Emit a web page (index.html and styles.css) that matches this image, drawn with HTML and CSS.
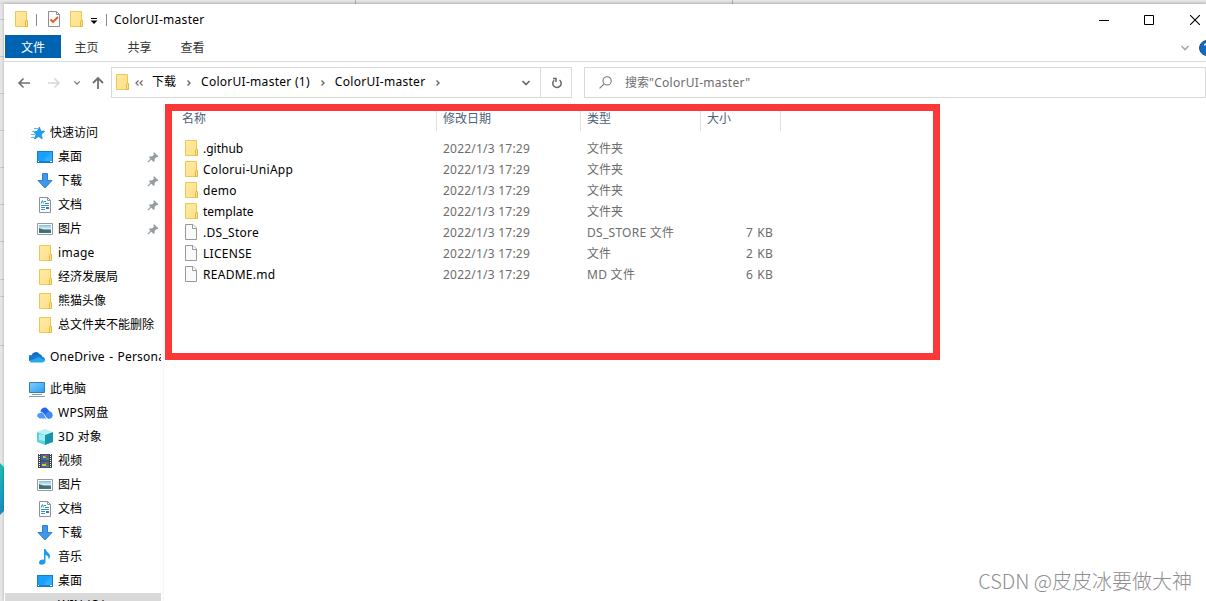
FILE: index.html
```
<!doctype html>
<html lang="zh-CN">
<head>
    <meta charset="UTF-8">
    <meta name="viewport" content="width=device-width, initial-scale=1.0">
    <title>ColorUI-master</title>
    <link rel="stylesheet" href="styles.css">
</head>
<body>
    <!-- shared icons -->
    <svg class="sprite">
        <defs>
            <linearGradient id="g-folder" x1="0" y1="0" x2="1" y2="1"><stop offset="0" stop-color="#ffe9a2"/><stop offset="1" stop-color="#ffe08a"/></linearGradient>
            <linearGradient id="g-sky" x1="0" y1="0" x2="0" y2="1"><stop offset="0" stop-color="#7db8ea"/><stop offset=".5" stop-color="#e8f4fb"/><stop offset=".6" stop-color="#4c7d76"/><stop offset="1" stop-color="#3d6f9c"/></linearGradient>
            <linearGradient id="g-screen" x1="0" y1="0" x2="1" y2="1"><stop offset="0" stop-color="#7fd0fb"/><stop offset="1" stop-color="#2a9df4"/></linearGradient>
            <linearGradient id="g-cloud" x1="0" y1="0" x2="0" y2="1"><stop offset="0" stop-color="#0f5fb8"/><stop offset="1" stop-color="#1f9cec"/></linearGradient>
        </defs>
        <symbol id="folder" viewBox="0 0 16 16">
            <path d="M2.500.5h11V15.500h-11z" fill="url(#g-folder)" stroke="#ecc850"/>
            <path d="M12.500 15.500v-5l.5-1h1.500v6z" fill="#ffe48f" stroke="#e3b93c"/>
        </symbol>
        <symbol id="file" viewBox="0 0 16 16">
            <path d="M2.500.5h7.500l3.500 3.500v11.500h-11z" fill="#fafafa" stroke="#999"/>
            <path d="M9.500.5v4h4" fill="#fff" stroke="#999"/>
        </symbol>
        <symbol id="doc" viewBox="0 0 16 16">
            <path d="M2.500.5h8l3 3v12h-11z" fill="#fff" stroke="#8d9296"/>
            <path d="M10.500.5v3h3" fill="none" stroke="#8d9296"/>
            <path d="M4 6.500l1.500-3 1 3M7 4.500h2M8 6.500h4M4 8.500h8M4 10.500h4M4 12.500h4" fill="none" stroke="#2b93d6"/>
            <path d="M9 10h3v2H9z" fill="#3978a8"/>
        </symbol>
        <symbol id="picture" viewBox="0 0 16 16">
            <path d="M.5 2.500h15v11H.5z" fill="#fff" stroke="#999"/>
            <path d="M2 4h12v8H2z" fill="url(#g-sky)"/>
            <path d="M2 7l5 2 7 1v1H2z" fill="#3f716b"/>
        </symbol>
        <symbol id="desktop" viewBox="0 0 16 16">
            <path d="M0 2h16v12H0z" fill="#0e80d5"/>
            <path d="M1 3h14v9H1z" fill="#18a0fb"/>
            <path d="M15 3v9H6z" fill="#35adfd"/>
            <path d="M1 12.500h1M13 12.500h2" stroke="#fff"/>
        </symbol>
        <symbol id="download" viewBox="0 0 16 16">
            <path d="M5.500.5h5v7h4.500L8 15 1 7.500h4.500z" fill="#3f97e8" stroke="#2f80cf"/>
        </symbol>
        <symbol id="star" viewBox="0 0 16 16">
            <path d="M10.500 2l1.200 4 4 .3-3.300 3 .8 4.700-3.500-2.500L5.500 14l1.500-4.500-2.500-3 3.800-.2z" fill="#1ba1f2" stroke="#1687cf" stroke-width=".7"/>
            <path d="M5 3.500h4M3 6.500h3M2 9.500h4M2 12.500h4" stroke="#5cbaf5"/>
        </symbol>
        <symbol id="onedrive" viewBox="0 0 16 16">
            <path d="M3 12a3 3 0 0 1-.5-5.500A4.500 4.500 0 0 1 10.500 5a4 4 0 0 1 3 3A2.500 2.500 0 0 1 13.500 13H3z" fill="url(#g-cloud)"/>
            <path d="M.5 12L9 8l6.500 3A2.500 2.500 0 0 1 13.500 13.500H3.500A3 3 0 0 1 .5 12z" fill="#28a8ea"/>
            <path d="M.5 12a3 3 0 0 1 2.500-5.500l6 1.700z" fill="#1479ce"/>
        </symbol>
        <symbol id="pc" viewBox="0 0 16 16">
            <path d="M.5 1.500h15v10H.5z" fill="url(#g-screen)" stroke="#3c7da8"/>
            <path d="M0 15.500h16M3 13.500h10" stroke="#8b9bab"/>
        </symbol>
        <symbol id="wps" viewBox="0 0 16 16">
            <path d="M3 13.500A3 3 0 0 1 1 8.500l4-1 5 6z" fill="#4b9bf9"/>
            <path d="M3.500 7A4 4 0 0 1 10.500 4l3 3.500A3.500 3.500 0 0 1 13 13.500h-2z" fill="#2268e4"/>
            <path d="M11 6.500a3.500 3.500 0 0 1 2 7h-2l-3-4z" fill="#3c8bf6"/>
            <path d="M3 7.300c2-.3 3 .5 4 2l2.500 4" fill="none" stroke="#fff" stroke-width=".8"/>
        </symbol>
        <symbol id="cube" viewBox="0 0 16 16">
            <path d="M0 3l8-3 8 3-8 3z" fill="#b5f1f5"/>
            <path d="M0 3l8 3v10l-8-3z" fill="#58d5df"/>
            <path d="M16 3L8 6v10l8-3z" fill="#1795ac"/>
            <path d="M2 5l6 1v6l-6-1z" fill="#a4ecf1"/>
        </symbol>
        <symbol id="video" viewBox="0 0 16 16">
            <path d="M1 1h14v14H1z" fill="#454545"/>
            <path d="M2.500 1v14M13.500 1v14" stroke="#fff" stroke-dasharray="1 1"/>
            <path d="M4 1.500h8v6H4zM4 8.500h8v6H4z" fill="#3567b2"/>
            <path d="M6 3h3v2H6zM5 11h4v2H5z" fill="#f0ba32"/>
            <path d="M9 5h3v2H9zM9 12h3v2H9z" fill="#3f9a4a"/>
            <path d="M8 2h2v2H8zM8 9h2v2H8z" fill="#d84d36"/>
        </symbol>
        <symbol id="music" viewBox="0 0 16 16">
            <path d="M7 0h1.500c.5 3 5 4 4.500 7.500-.2 1.500-1 2.500-1.500 3 .5-3-1-4-3-4.500v7c0 3-6.500 4-6.500.8C2 11 5.500 10 7 11z" fill="#1a9df0"/>
        </symbol>
        <symbol id="drive" viewBox="0 0 16 16">
            <path d="M0 7.500l4-.6v4H0zM5 6.700l5-.7v5H5z" fill="#10b4f0"/>
        </symbol>
        <symbol id="pin" viewBox="0 0 12 12">
            <path d="M7 1l4.500 4.500-1 .8-1-.3-2 2 .2 2-1 1L2 6.300l1-1 2 .2 2-2-.5-1.200z" fill="#939ca3"/>
            <path d="M4.300 7.700L1 11" stroke="#939ca3" stroke-width="1.200"/>
        </symbol>
        <symbol id="chevron-right" viewBox="0 0 8 8">
            <path d="M2.500 1.500L5 4 2.500 6.500" fill="none" stroke="#666" stroke-width="1.400"/>
        </symbol>
        <symbol id="chevron-down" viewBox="0 0 10 10">
            <path d="M1.500 3L5 6.500 8.500 3" fill="none" stroke="currentColor" stroke-width="1.600"/>
        </symbol>
    </svg>

    <!-- edge of the window behind -->
    <div class="behind">
        <span class="tab-edge first"></span>
        <span class="tab-edge second"></span>
        <span class="line l1"></span>
        <span class="line l2"></span>
        <span class="line l3"></span>
        <span class="line l4"></span>
        <span class="line l5"></span>
        <span class="line l6"></span>
        <span class="line l7"></span>
        <span class="line l8"></span>
        <span class="line l9"></span>
        <span class="line l10"></span>
        <span class="bubble"></span>
    </div>

    <div class="window">
        <div class="title-bar">
            <svg class="icon"><use href="#folder"/></svg>
            <span class="sep"></span>
            <svg class="icon check" viewBox="0 0 16 16">
                <path d="M2.500.5h8l3 3v12h-11z" fill="#fafafa" stroke="#8f8f8f"/>
                <path d="M10.500.5v3h3" fill="none" stroke="#8f8f8f"/>
                <path d="M4.500 8.500l2.500 2.500 5-5" fill="none" stroke="#e8562a" stroke-width="1.800"/>
            </svg>
            <svg class="icon new"><use href="#folder"/></svg>
            <svg class="customize" viewBox="0 0 8 8"><path d="M1 1.500h6" stroke="#000"/><path d="M.5 3.500h7L4 7z"/></svg>
            <span class="sep after"></span>
            <span class="title wide">ColorUI-master</span>
            <div class="controls">
                <svg viewBox="0 0 10 10"><path d="M0 5.500h10" stroke="#000"/></svg>
                <svg viewBox="0 0 10 10"><path d="M.5.5h9v9h-9z" fill="none" stroke="#000"/></svg>
                <svg viewBox="0 0 10 10"><path d="M0 0l10 10M10 0L0 10" stroke="#000" stroke-width="1.100"/></svg>
            </div>
        </div>

        <div class="ribbon">
            <a class="active">文件</a>
            <a>主页</a>
            <a>共享</a>
            <a>查看</a>
            <svg class="expand"><use href="#chevron-down"/></svg>
            <svg class="help" viewBox="0 0 7 16">
                <circle cx="8" cy="8" r="7.500" fill="#0b6bc7" stroke="#2c4f78"/>
                <path d="M5.500 5.500Q6 4 7 3.700" fill="none" stroke="#fff" stroke-width="1.400"/>
            </svg>
        </div>

        <div class="address-row">
            <div class="arrows">
                <svg class="back" viewBox="0 0 14 14"><path d="M13 7H2M6.500 2.500L2 7l4.500 4.500" fill="none" stroke="#707070" stroke-width="1.600"/></svg>
                <svg class="forward" viewBox="0 0 14 14"><path d="M1 7h11M7.500 2.500L12 7l-4.500 4.500" fill="none" stroke="#d8d8d8" stroke-width="1.600"/></svg>
                <svg class="recent"><use href="#chevron-down"/></svg>
                <svg class="up" viewBox="0 0 14 14"><path d="M7 13V2M2 7l5-5 5 5" fill="none" stroke="#707070" stroke-width="1.800"/></svg>
            </div>
            <div class="address">
                <svg class="icon"><use href="#folder"/></svg>
                <svg class="more" viewBox="0 0 10 8"><path d="M4.500 1.500L2 4l2.500 2.500M8.500 1.500L6 4l2.500 2.500" fill="none" stroke="#666" stroke-width="1.200"/></svg>
                <span class="crumb">下载</span>
                <svg class="arrow"><use href="#chevron-right"/></svg>
                <span class="crumb wide">ColorUI-master (1)</span>
                <svg class="arrow"><use href="#chevron-right"/></svg>
                <span class="crumb wide">ColorUI-master</span>
                <svg class="arrow"><use href="#chevron-right"/></svg>
                <svg class="drop"><use href="#chevron-down"/></svg>
                <span class="refresh">
                    <svg viewBox="0 0 12 12"><path d="M3.200 3.200A4.200 4.200 0 1 0 8.500 3M2 1.500h3V5" fill="none" stroke="#666" stroke-width="1.500"/></svg>
                </span>
            </div>
            <div class="search">
                <svg viewBox="0 0 12 12"><circle cx="7.500" cy="4.500" r="3.800" fill="none" stroke="#777"/><path d="M4.800 7.200L.5 11.500" stroke="#777"/></svg>
                <span>搜索<span class="wide">"ColorUI-master"</span></span>
            </div>
        </div>

        <div class="main">
            <div class="sidebar">
                <div class="item root"><svg class="icon"><use href="#star"/></svg><span>快速访问</span></div>
                <div class="item"><svg class="icon"><use href="#desktop"/></svg><span>桌面</span><svg class="pin"><use href="#pin"/></svg></div>
                <div class="item"><svg class="icon"><use href="#download"/></svg><span>下载</span><svg class="pin"><use href="#pin"/></svg></div>
                <div class="item"><svg class="icon"><use href="#doc"/></svg><span>文档</span><svg class="pin"><use href="#pin"/></svg></div>
                <div class="item"><svg class="icon"><use href="#picture"/></svg><span>图片</span><svg class="pin"><use href="#pin"/></svg></div>
                <div class="item"><svg class="icon"><use href="#folder"/></svg><span class="wide">image</span></div>
                <div class="item"><svg class="icon"><use href="#folder"/></svg><span>经济发展局</span></div>
                <div class="item"><svg class="icon"><use href="#folder"/></svg><span>熊猫头像</span></div>
                <div class="item"><svg class="icon"><use href="#folder"/></svg><span>总文件夹不能删除</span></div>
                <div class="item root spaced"><svg class="icon"><use href="#onedrive"/></svg><span class="onedrive">OneDrive - Personal</span></div>
                <div class="item root spaced"><svg class="icon"><use href="#pc"/></svg><span>此电脑</span></div>
                <div class="item"><svg class="icon"><use href="#wps"/></svg><span class="wide">WPS网盘</span></div>
                <div class="item"><svg class="icon"><use href="#cube"/></svg><span class="wide">3D 对象</span></div>
                <div class="item"><svg class="icon"><use href="#video"/></svg><span>视频</span></div>
                <div class="item"><svg class="icon"><use href="#picture"/></svg><span>图片</span></div>
                <div class="item"><svg class="icon"><use href="#doc"/></svg><span>文档</span></div>
                <div class="item"><svg class="icon"><use href="#download"/></svg><span>下载</span></div>
                <div class="item"><svg class="icon"><use href="#music"/></svg><span>音乐</span></div>
                <div class="item"><svg class="icon"><use href="#desktop"/></svg><span>桌面</span></div>
                <div class="item selected"><svg class="icon"><use href="#drive"/></svg><span class="wide">WIN (C:)</span></div>
            </div>

            <div class="files">
                <div class="row head">
                    <span>名称</span>
                    <span>修改日期</span>
                    <span>类型</span>
                    <span>大小</span>
                </div>
                <div class="row"><span class="name"><svg class="icon"><use href="#folder"/></svg>.github</span><span class="date">2022/1/3 17:29</span><span>文件夹</span><span class="size"></span></div>
                <div class="row"><span class="name wide"><svg class="icon"><use href="#folder"/></svg>Colorui-UniApp</span><span class="date">2022/1/3 17:29</span><span>文件夹</span><span class="size"></span></div>
                <div class="row"><span class="name wide"><svg class="icon"><use href="#folder"/></svg>demo</span><span class="date">2022/1/3 17:29</span><span>文件夹</span><span class="size"></span></div>
                <div class="row"><span class="name"><svg class="icon"><use href="#folder"/></svg>template</span><span class="date">2022/1/3 17:29</span><span>文件夹</span><span class="size"></span></div>
                <div class="row"><span class="name wide"><svg class="icon"><use href="#file"/></svg>.DS_Store</span><span class="date">2022/1/3 17:29</span><span class="wide">DS_STORE 文件</span><span class="size">7 KB</span></div>
                <div class="row"><span class="name wide"><svg class="icon"><use href="#file"/></svg>LICENSE</span><span class="date">2022/1/3 17:29</span><span>文件</span><span class="size">2 KB</span></div>
                <div class="row"><span class="name wide"><svg class="icon"><use href="#file"/></svg>README.md</span><span class="date">2022/1/3 17:29</span><span class="wide">MD 文件</span><span class="size">6 KB</span></div>
            </div>
        </div>
    </div>

    <div class="highlight"></div>
    <div class="watermark">CSDN @皮皮冰要做大神</div>
</body>
</html>
```
FILE: styles.css
```
* {
    box-sizing: border-box;
}

body {
    margin: 0;
    padding: 4px 0 0 4px;
    width: 1206px;
    height: 601px;
    overflow: hidden;
    position: relative;
    background-color: #e6e6e6;
    font-family: "Noto Sans", "Noto Sans CJK SC", sans-serif;
    font-size: 12px;
    line-height: 16px;
    color: #000;
}

svg {
    display: block;
    flex: none;
}

.sprite {
    position: absolute;
    width: 0;
    height: 0;
}

.icon {
    width: 16px;
    height: 16px;
}

.wide {
    letter-spacing: 0.28px;
}

/* window behind */
.behind {
    position: absolute;
    inset: 0;
    overflow: hidden;
    background: linear-gradient(#e9e9e9, #d4d4d4) top / 100% 4px no-repeat;
}

.tab-edge {
    position: absolute;
    top: 0;
    width: 1px;
    height: 4px;
    background-color: #a3adb8;
}

.tab-edge.first {
    left: 355px;
}

.tab-edge.second {
    left: 732px;
}

.line {
    position: absolute;
    left: 0;
    width: 4px;
    height: 1px;
    background-color: #c5c9cf;
}

.l1 { top: 19px; }
.l2 { top: 56px; }
.l3 { top: 93px; }
.l4 { top: 130px; }
.l5 { top: 167px; }
.l6 { top: 204px; }
.l7 { top: 241px; }
.l8 { top: 279px; }
.l9 { top: 296px; }
.l10 { top: 345px; }

.bubble {
    position: absolute;
    left: -56px;
    top: 455px;
    width: 68px;
    height: 68px;
    border-radius: 50%;
    background: linear-gradient(#18c9b4, #1c80c8);
}

.window {
    position: relative;
    height: 597px;
    overflow: hidden;
    background-color: #fff;
    box-shadow: 0 0 3px rgba(0, 0, 0, 0.25);
    display: flex;
    flex-direction: column;
}

/* title bar */
.title-bar {
    height: 31px;
    flex: none;
    display: flex;
    align-items: center;
    padding-left: 9px;
}

.title-bar > .icon {
    margin-top: -1px;
}

.sep {
    width: 1px;
    height: 12px;
    margin-left: 7px;
    background-color: #8a8a8a;
}

.check {
    margin-left: 9px;
}

.new {
    margin-left: 6px;
}

.customize {
    width: 8px;
    height: 8px;
    margin: 3px 0 0 6px;
}

.sep.after {
    margin-left: 8px;
}

.title {
    margin-left: 7px;
}

.controls {
    display: flex;
    gap: 35px;
    margin-left: auto;
    padding-right: 7px;
}

.controls svg {
    width: 10px;
    height: 10px;
}

.controls svg:last-child {
    margin-left: 1px;
    margin-right: -1px;
}

/* ribbon */
.ribbon {
    height: 27px;
    flex: none;
    display: flex;
    align-items: flex-start;
    border-bottom: 1px solid #dadbdc;
    padding-left: 1px;
}

.ribbon a {
    width: 53px;
    height: 23px;
    line-height: 25px;
    padding-right: 2px;
    text-align: center;
    color: #333;
}

.ribbon .active {
    width: 56px;
    padding-right: 0;
    background-color: #0063b1;
    color: #fff;
}

.expand {
    width: 10px;
    height: 10px;
    margin: 8px 9px 0 auto;
    color: #aaa;
}

.help {
    width: 7px;
    height: 16px;
    margin-top: 5px;
}

/* address bar */
.address-row {
    height: 42px;
    flex: none;
    display: flex;
    align-items: flex-start;
    padding-top: 5px;
}

.arrows {
    width: 107px;
    height: 31px;
    display: flex;
    align-items: center;
    color: #777;
}

.arrows svg {
    width: 14px;
    height: 14px;
}

.back {
    margin-left: 13px;
}

.forward {
    margin-left: 16px;
}

.arrows .recent {
    width: 8px;
    height: 8px;
    margin-left: 12px;
}

.up {
    margin-left: 10px;
}

.address {
    width: 461px;
    height: 31px;
    display: flex;
    align-items: center;
    border: 1px solid #d9d9d9;
    padding-left: 2px;
}

.address .icon {
    margin-top: -1px;
}

.crumb {
    margin-top: -1px;
}

.more {
    width: 10px;
    height: 8px;
    margin: 0 8px 0 4px;
}

.arrow {
    width: 8px;
    height: 8px;
    margin: 0 8px 0 9px;
}

.drop {
    width: 10px;
    height: 10px;
    margin-left: auto;
    color: #666;
}

.refresh {
    width: 31px;
    height: 29px;
    margin-left: 9px;
    padding-left: 2px;
    border-left: 1px solid #d9d9d9;
    display: flex;
    align-items: center;
    justify-content: center;
}

.refresh svg {
    width: 12px;
    height: 12px;
}

.search {
    flex: 1;
    height: 31px;
    margin-left: 12px;
    display: flex;
    align-items: center;
    border: 1px solid #d9d9d9;
    padding-left: 14px;
    color: #6d6d6d;
}

.search svg {
    width: 13px;
    height: 13px;
    margin-right: 13px;
}

/* content */
.main {
    flex: 1;
    display: flex;
    min-height: 0;
}

.sidebar {
    width: 157px;
    flex: none;
    padding: 17px 0 0 1px;
    overflow: hidden;
}

.item {
    height: 24px;
    display: flex;
    align-items: center;
    padding-left: 32px;
    white-space: nowrap;
}

.item span {
    margin-left: 5px;
}

.item.root {
    padding-left: 24px;
}

.item.spaced {
    margin-top: 8px;
}

.item.selected {
    background-color: #d9d9d9;
}

.item .onedrive {
    letter-spacing: 0.2px;
    word-spacing: 1px;
}

.pin {
    width: 12px;
    height: 12px;
    margin-left: auto;
    margin-right: 2px;
}

.files {
    flex: 1;
    margin-left: 2px;
    border-left: 1px solid #f5f5f5;
    padding-top: 3px;
}

.row {
    display: grid;
    grid-template-columns: 273px 144px 120px 80px;
    height: 21px;
    line-height: 21px;
    color: #6d6d6d;
}

.row > span {
    padding-left: 6px;
}

.row .name {
    display: flex;
    align-items: center;
    padding-left: 19px;
    color: #000;
}

.name .icon {
    margin-top: -1px;
    margin-right: 4px;
}

.date {
    letter-spacing: 0.22px;
}

.row .size {
    padding: 0 8px 0 0;
    text-align: right;
    word-spacing: 1px;
    letter-spacing: 0.2px;
}

.head {
    height: 24px;
    line-height: 23px;
    margin-bottom: 7px;
    color: #4c607a;
}

.head span {
    border-right: 1px solid #e2e2e2;
}

.head span:first-child {
    padding-left: 18px;
}

/* red frame over the file list */
.highlight {
    position: absolute;
    left: 165px;
    top: 104px;
    width: 775px;
    height: 256px;
    border: 7px solid #fc3737;
}

.watermark {
    position: absolute;
    right: 14px;
    bottom: 7px;
    font-family: "Noto Sans CJK SC", sans-serif;
    font-size: 20px;
    font-weight: 300;
    line-height: 26px;
    white-space: nowrap;
    color: #8f8f8f;
}
```
